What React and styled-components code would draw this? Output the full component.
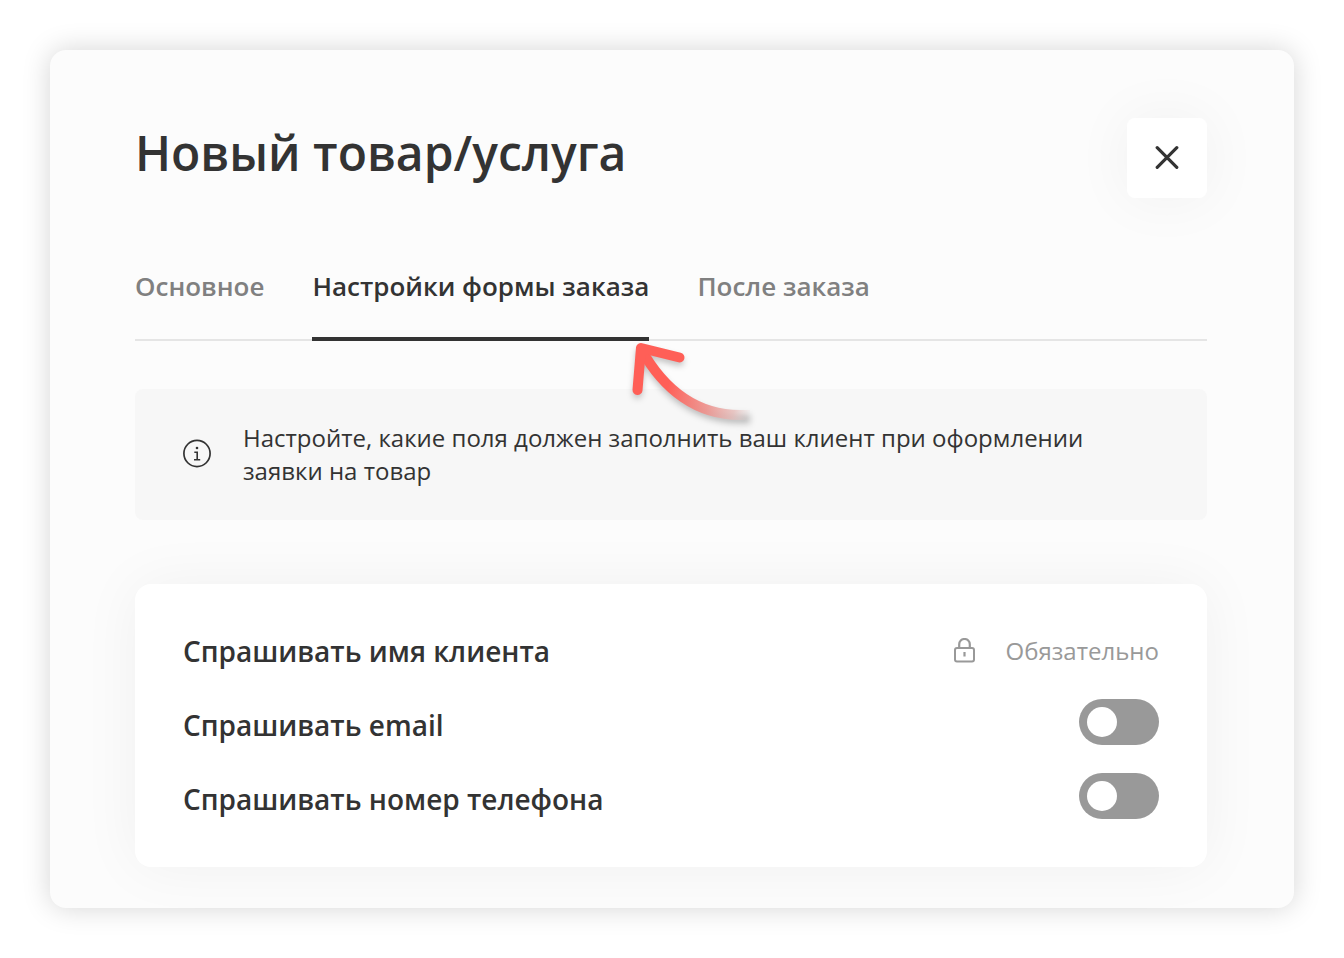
import React, { useState } from "react";
import styled, { createGlobalStyle } from "styled-components";

const tabs = ["Основное", "Настройки формы заказа", "После заказа"];

const App = () => {
  const [active, setActive] = useState(1);
  const [email, setEmail] = useState(false);
  const [phone, setPhone] = useState(false);

  return (
    <>
      <GlobalStyle />
      <Page>
        <Modal role="dialog" aria-labelledby="title">
          <Header>
            <Title id="title">Новый товар/услуга</Title>
            <CloseButton type="button" aria-label="Закрыть">
              <CloseIcon />
            </CloseButton>
          </Header>
          <Tabs role="tablist">
            {tabs.map((tab, i) => (
              <Tab
                key={tab}
                type="button"
                role="tab"
                aria-selected={i === active}
                $active={i === active}
                onClick={() => setActive(i)}
              >
                {tab}
                {i === 1 && <Arrow />}
              </Tab>
            ))}
          </Tabs>
          <Notice>
            <InfoIcon />
            <p>
              Настройте, какие поля должен заполнить ваш клиент при оформлении
              заявки на товар
            </p>
          </Notice>
          <Fields>
            <Row>
              <Label as="span">Спрашивать имя клиента</Label>
              <Required>
                <LockIcon />
                Обязательно
              </Required>
            </Row>
            <Row>
              <Label htmlFor="email">Спрашивать email</Label>
              <Toggle
                id="email"
                checked={email}
                onChange={(e) => setEmail(e.target.checked)}
              />
            </Row>
            <Row>
              <Label htmlFor="phone">Спрашивать номер телефона</Label>
              <Toggle
                id="phone"
                checked={phone}
                onChange={(e) => setPhone(e.target.checked)}
              />
            </Row>
          </Fields>
        </Modal>
      </Page>
    </>
  );
};

//Icons
const CloseIcon = () => (
  <svg width="24" height="24" viewBox="0 0 24 24" fill="none" aria-hidden="true">
    <path
      d="M2.200 1.700L21.800 21.300M21.800 1.700L2.200 21.300"
      stroke="#333"
      strokeWidth="3.200"
      strokeLinecap="round"
    />
  </svg>
);

const InfoIcon = () => (
  <svg width="30" height="30" viewBox="0 0 30 30" fill="none" aria-hidden="true">
    <circle cx="15" cy="14.5" r="13.1" stroke="#333" strokeWidth="1.7" />
    <circle cx="15" cy="9" r="1.3" fill="#333" />
    <path d="M12.300 13.200H15.200V20.700M12 20.700H18.200" stroke="#333" strokeWidth="1.600" />
  </svg>
);

const LockIcon = () => (
  <svg width="22" height="26" viewBox="0 0 22 26" fill="none" aria-hidden="true">
    <rect x="1" y="10" width="19" height="13.5" rx="2" stroke="#999" strokeWidth="2" />
    <path
      d="M5.200 10V6.300A5.300 5.300 0 0 1 15.800 6.300V10M10.500 14V18.500"
      stroke="#999"
      strokeWidth="2.200"
    />
  </svg>
);

const tailPath = "M641 349C664 390 697 415 740 415H750";
const headPath = "M679.500 357.500L641 348L637.500 390";

const Arrow = () => (
  <ArrowSvg width="150" height="110" viewBox="620 335 150 110" fill="none" aria-hidden="true">
    <defs>
      <linearGradient
        id="tail"
        gradientUnits="userSpaceOnUse"
        x1="668"
        y1="385"
        x2="752"
        y2="415"
      >
        <stop offset="0" stopColor="#ff5f57" />
        <stop offset="0.5" stopColor="#ee928d" stopOpacity="0.9" />
        <stop offset="0.8" stopColor="#e6bab7" stopOpacity="0.75" />
        <stop offset="1" stopColor="#e6d5d5" stopOpacity="0" />
      </linearGradient>
      <filter id="blur" x="-20%" y="-20%" width="140%" height="150%">
        <feGaussianBlur stdDeviation="3" />
      </filter>
    </defs>
    <g
      transform="translate(0 4)"
      stroke="#000"
      strokeOpacity="0.24"
      strokeWidth="9"
      strokeLinejoin="round"
      filter="url(#blur)"
    >
      <path d={tailPath} />
      <path d={headPath} strokeLinecap="round" />
    </g>
    <path d={tailPath} stroke="url(#tail)" strokeWidth="10" />
    <path
      d={headPath}
      stroke="#ff5f57"
      strokeWidth="10"
      strokeLinecap="round"
      strokeLinejoin="round"
    />
  </ArrowSvg>
);

//Styles
const GlobalStyle = createGlobalStyle`
  * {
    margin: 0;
    padding: 0;
    box-sizing: border-box;
  }
  body {
    background: white;
    color: #333;
    font-family: "Open Sans", "Noto Sans", sans-serif;
  }
  button {
    border: none;
    background: none;
    font: inherit;
    cursor: pointer;
  }
`;
const Page = styled.main`
  padding: 50px;
`;
const Modal = styled.section`
  padding: 68px 87px 41px 85px;
  background: #fcfcfc;
  border-radius: 16px;
  box-shadow: 0 0 28px rgba(0, 0, 0, 0.17);
`;
const Header = styled.header`
  display: flex;
  justify-content: space-between;
  align-items: flex-start;
`;
const Title = styled.h1`
  font-size: 48px;
  font-weight: 600;
  line-height: 70px;
`;
const CloseButton = styled.button`
  display: flex;
  align-items: center;
  justify-content: center;
  width: 80px;
  height: 80px;
  background: white;
  border-radius: 8px;
  box-shadow: 0 0 60px rgba(0, 0, 0, 0.05);
`;
const Tabs = styled.div`
  display: flex;
  gap: 48px;
  margin-top: 70px;
  box-shadow: inset 0 -2px #e5e5e5;
`;
const Tab = styled.button`
  position: relative;
  padding-bottom: 32px;
  border-bottom: 4px solid ${({ $active }) => ($active ? "#333" : "transparent")};
  color: ${({ $active }) => ($active ? "#333" : "#808080")};
  font-size: 26px;
  font-weight: 600;
  line-height: 37px;
`;
const ArrowSvg = styled.svg`
  position: absolute;
  top: 67px;
  right: -121px;
  z-index: 1;
  pointer-events: none;
`;
const Notice = styled.div`
  display: flex;
  align-items: center;
  gap: 31px;
  margin-top: 48px;
  padding: 32px 96px 33px 47px;
  background: #f7f7f7;
  border-radius: 8px;
  svg {
    flex-shrink: 0;
  }
  p {
    font-size: 24px;
    line-height: 33px;
  }
`;
const Fields = styled.form`
  display: flex;
  flex-direction: column;
  gap: 22px;
  margin-top: 64px;
  padding: 41px 48px 42px;
  background: white;
  border-radius: 16px;
  box-shadow: 0 0 60px rgba(0, 0, 0, 0.05);
`;
const Row = styled.div`
  display: flex;
  justify-content: space-between;
  align-items: flex-start;
`;
const Label = styled.label`
  font-size: 28px;
  font-weight: 600;
  line-height: 52px;
`;
const Required = styled.span`
  display: flex;
  align-items: center;
  gap: 30px;
  color: #999;
  font-size: 24px;
  line-height: 52px;
`;
const Toggle = styled.input.attrs({ type: "checkbox", role: "switch" })`
  appearance: none;
  width: 80px;
  height: 46px;
  padding: 8px;
  background: ${({ checked }) => (checked ? "#333" : "#999")};
  border-radius: 23px;
  cursor: pointer;
  &::before {
    content: "";
    display: block;
    width: 30px;
    height: 30px;
    margin-left: ${({ checked }) => (checked ? "34px" : "0")};
    background: white;
    border-radius: 50%;
  }
`;

export default App;
